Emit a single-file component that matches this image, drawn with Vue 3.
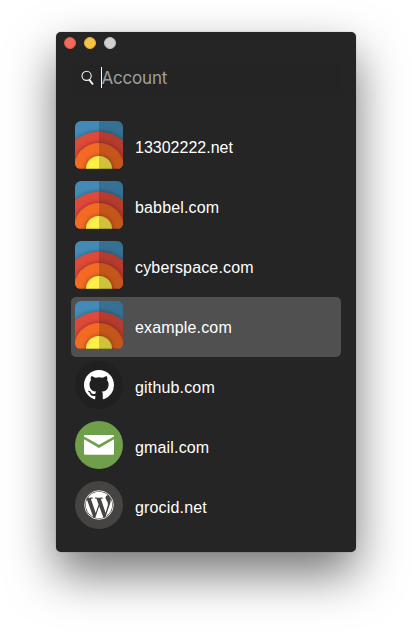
<script setup>
import { ref } from 'vue'

const accounts = [
  { name: '13302222.net', icon: 'default' },
  { name: 'babbel.com', icon: 'default' },
  { name: 'cyberspace.com', icon: 'default' },
  { name: 'example.com', icon: 'default' },
  { name: 'github.com', icon: 'github' },
  { name: 'gmail.com', icon: 'mail' },
  { name: 'grocid.net', icon: 'wordpress' }
]
const selected = ref('example.com')
</script>

<template>
  <main class="desktop">
    <section class="window">
      <header class="titlebar">
        <span class="light close"></span>
        <span class="light minimize"></span>
        <span class="light zoom"></span>
      </header>
      <div class="search">
        <svg class="lens" viewBox="0 0 14 16" width="14" height="16" fill="none" stroke="#f4f4f4">
          <circle cx="5.6" cy="5.8" r="4.6" stroke-width="1.1" />
          <path d="M8.1 9.500L12 14.500" stroke-width="2" />
        </svg>
        <span class="caret"></span>
        <span class="placeholder">Account</span>
      </div>
      <ul class="list">
        <li
          v-for="account in accounts"
          :key="account.name"
          class="row"
          :class="{ selected: account.name === selected }"
          @click="selected = account.name"
        >
          <svg v-if="account.icon === 'default'" class="icon" viewBox="0 0 48 48">
            <defs>
              <clipPath id="tile"><rect width="48" height="48" rx="6" /></clipPath>
              <filter id="glow" x="-30%" y="-30%" width="160%" height="160%">
                <feDropShadow dx="0" dy="0" stdDeviation="2.400" flood-color="#000" flood-opacity=".42" />
              </filter>
            </defs>
            <g clip-path="url(#tile)">
              <rect width="48" height="48" fill="#438bb6" />
              <circle cx="24" cy="47" r="36.300" fill="#df4838" filter="url(#glow)" />
              <circle cx="24" cy="47" r="25" fill="#f36a22" filter="url(#glow)" />
              <circle cx="24" cy="48" r="13" fill="#fff04a" filter="url(#glow)" />
              <rect x="24" width="24" height="48" fill="#000" opacity=".19" />
              <rect y="47.400" width="48" height=".6" fill="#000" opacity=".3" />
            </g>
          </svg>
          <svg v-else-if="account.icon === 'github'" class="icon" viewBox="0 0 48 48">
            <circle cx="24" cy="24" r="24" fill="#202020" />
            <path
              transform="translate(9 9) scale(1.875)"
              fill="#fff"
              d="M8 0C3.58 0 0 3.58 0 8c0 3.54 2.29 6.53 5.47 7.59.4.07.55-.17.55-.38 0-.19-.01-.82-.01-1.49-2.01.37-2.53-.49-2.69-.94-.09-.23-.48-.94-.82-1.13-.28-.15-.68-.52-.01-.53.63-.01 1.08.58 1.23.82.72 1.21 1.87.87 2.33.66.07-.52.28-.87.51-1.07-1.78-.2-3.64-.89-3.64-3.95 0-.87.31-1.59.82-2.15-.08-.2-.36-1.02.08-2.12 0 0 .67-.21 2.2.82.64-.18 1.32-.27 2-.27s1.36.09 2 .27c1.53-1.04 2.2-.82 2.2-.82.44 1.1.16 1.92.08 2.12.51.56.82 1.27.82 2.15 0 3.07-1.87 3.75-3.65 3.95.29.25.54.73.54 1.48 0 1.07-.01 1.93-.01 2.2 0 .21.15.46.55.38A8.01 8.01 0 0 0 16 8c0-4.42-3.58-8-8-8z"
            />
          </svg>
          <svg v-else-if="account.icon === 'mail'" class="icon" viewBox="0 0 48 48">
            <circle cx="24" cy="24" r="24" fill="#6f9f4a" />
            <path fill="#fff" d="M10 14h28q1 0 1 1v.5L24 23.800 9 15.500V15q0-1 1-1z" />
            <path fill="#fff" d="M9 18.200l15 8.800 15-8.800V32.500q0 1.300-1.300 1.300H10.300Q9 33.800 9 32.500z" />
          </svg>
          <svg v-else class="icon" viewBox="0 0 48 48">
            <circle cx="24" cy="24" r="24" fill="#464442" />
            <g transform="translate(9.300 9.300) scale(1.225)">
              <circle cx="12" cy="12" r="11.700" fill="none" stroke="#fff" stroke-width=".65" />
              <path
                fill="#fff"
                d="M21.469 6.825c.84 1.537 1.318 3.3 1.318 5.175 0 3.979-2.156 7.456-5.363 9.325l3.295-9.527c.615-1.54.82-2.771.82-3.864 0-.405-.026-.78-.07-1.11m-7.981.105c.647-.03 1.232-.105 1.232-.105.582-.075.514-.93-.067-.899 0 0-1.755.135-2.88.135-1.064 0-2.85-.15-2.85-.15-.585-.03-.661.855-.075.885 0 0 .54.061 1.125.09l1.68 4.605-2.37 7.08L5.354 6.9c.649-.03 1.234-.1 1.234-.1.585-.075.516-.93-.065-.896 0 0-1.746.138-2.874.138-.2 0-.438-.008-.69-.015C4.911 3.15 8.235 1.215 12 1.215c2.809 0 5.365 1.072 7.286 2.833-.046-.003-.091-.009-.141-.009-1.06 0-1.812.923-1.812 1.914 0 .89.513 1.643 1.06 2.531.411.72.89 1.643.89 2.977 0 .915-.354 1.994-.821 3.479l-1.075 3.585-3.9-11.61zM12 22.784c-1.059 0-2.081-.153-3.048-.437l3.237-9.406 3.315 9.087c.024.053.05.101.078.149-1.12.393-2.325.609-3.582.609M1.211 12c0-1.564.336-3.05.935-4.39L7.29 21.709C3.694 19.96 1.212 16.271 1.211 12"
              />
            </g>
          </svg>
          <span class="name" :class="{ numeric: /^\d/.test(account.name) }">{{ account.name }}</span>
        </li>
      </ul>
    </section>
  </main>
</template>

<style>
body {
  background: #fff;
}
</style>

<style scoped>
.desktop {
  box-sizing: border-box;
  width: 412px;
  height: 632px;
  padding: 32px 56px 80px;
  overflow: hidden;
}
.window {
  box-sizing: border-box;
  width: 300px;
  height: 520px;
  border-radius: 5px;
  background: #252525;
  box-shadow: 0 0 1px rgba(0, 0, 0, 0.5), 0 22px 48px rgba(0, 0, 0, 0.54);
  font-family: "Liberation Sans", Arial, sans-serif;
}
.titlebar {
  display: flex;
  gap: 8px;
  height: 22px;
  padding-left: 8px;
  align-items: center;
}
.light {
  box-sizing: border-box;
  width: 12px;
  height: 12px;
  border-radius: 50%;
}
.close {
  background: #f26a5c;
  border: 1px solid #e2554a;
}
.minimize {
  background: #f7c343;
  border: 1px solid #e3ae35;
}
.zoom {
  background: #d1d1d2;
  border: 1px solid #bfbfc0;
}
.search {
  display: flex;
  align-items: center;
  height: 32px;
  margin: 8px 15px 23px;
  padding-left: 10px;
  border-radius: 4px;
  background: #242424;
}
.lens {
  margin-top: -1px;
}
.caret {
  width: 1px;
  height: 21px;
  margin-left: 6px;
  margin-top: -1px;
  background: #fff;
}
.placeholder {
  margin-left: -0.5px;
  font: 400 17px/22px Inter, sans-serif;
  letter-spacing: -0.2px;
  color: #a0a0a0;
}
.list {
  margin: 0;
  padding: 0 15px;
  list-style: none;
}
.row {
  display: flex;
  box-sizing: border-box;
  height: 60px;
  padding: 4px;
  gap: 12px;
  border-radius: 5px;
}
.row.selected {
  background: #505050;
}
.icon {
  width: 48px;
  height: 48px;
  flex: none;
}
.name {
  padding-top: 17px;
  font-size: 16px;
  line-height: 20px;
  letter-spacing: 0.16px;
  color: #fff;
}
.name.numeric {
  letter-spacing: 0;
}
</style>
